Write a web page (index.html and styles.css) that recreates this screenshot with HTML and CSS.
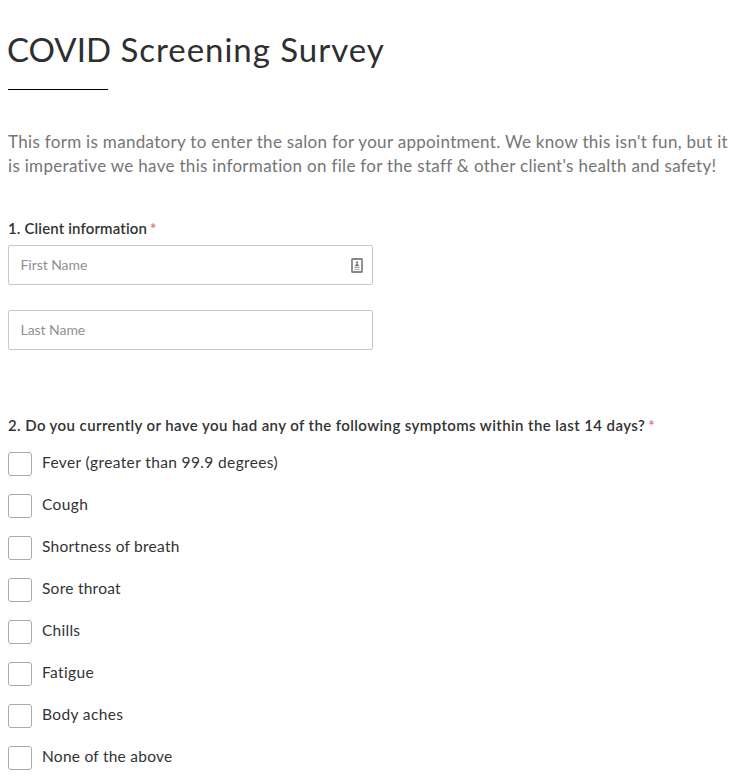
FILE: index.html
```html
<!DOCTYPE html>
<html lang="en">
<head>
<meta charset="utf-8">
<title>COVID Screening Survey</title>
<link rel="stylesheet" href="styles.css">
</head>
<body>
<main class="survey">
  <h1 class="title"><span class="acronym">COVID</span> Screening Survey</h1>
  <p class="intro">This form is mandatory to enter the salon for your appointment. We know this isn't fun, but it<br>is imperative we have this information on file for the staff &amp; other client's health and safety!</p>

  <section class="client">
    <h2 class="question question-short">1. Client information <span class="required">*</span></h2>
    <div class="field">
      <input class="input" type="text" placeholder="First Name" aria-label="First Name">
      <svg class="autofill" width="12" height="15" viewBox="0 0 12 15" aria-hidden="true">
        <rect x="1" y="1" width="10" height="13" rx="0.6" fill="#fff" stroke="#858585" stroke-width="1.8"/>
        <circle cx="6" cy="4.4" r="1.1" fill="#777"/>
        <path d="M6 5L8.4 8.2H3.6Z" fill="#777"/>
        <path d="M3.3 9.5H8.7M3.3 11.4H8.7" stroke="#a8a8a8" stroke-width="1"/>
      </svg>
    </div>
    <div class="field">
      <input class="input" type="text" placeholder="Last Name" aria-label="Last Name">
    </div>
  </section>

  <section class="symptoms">
    <h2 class="question">2. Do you currently or have you had any of the following symptoms within the last 14 days? <span class="required">*</span></h2>
    <div class="options">
      <label class="option"><input class="box" type="checkbox"><span class="label wide">Fever (greater than 99.9 degrees)</span></label>
      <label class="option"><input class="box" type="checkbox"><span class="label wide">Cough</span></label>
      <label class="option"><input class="box" type="checkbox"><span class="label">Shortness of breath</span></label>
      <label class="option"><input class="box" type="checkbox"><span class="label">Sore throat</span></label>
      <label class="option"><input class="box" type="checkbox"><span class="label">Chills</span></label>
      <label class="option"><input class="box" type="checkbox"><span class="label wide">Fatigue</span></label>
      <label class="option"><input class="box" type="checkbox"><span class="label wide">Body aches</span></label>
      <label class="option"><input class="box" type="checkbox"><span class="label">None of the above</span></label>
    </div>
  </section>
</main>
</body>
</html>
```

FILE: styles.css
```css
* { box-sizing: border-box; }

body {
  margin: 0;
  background: #fff;
  color: #333;
  font-family: Lato, "Open Sans", sans-serif;
}

.survey { padding: 27px 8px 0; }

.title {
  margin: 0;
  font-size: 33px;
  font-weight: 400;
  line-height: 44px;
  letter-spacing: 0.97px;
  color: #2e2f30;
}

.acronym {
  margin-left: -1px;
  letter-spacing: 0;
}

.title::after {
  content: "";
  display: block;
  width: 100px;
  height: 1px;
  margin-top: 18px;
  background: #000;
}

.intro {
  margin: 40px 0 0;
  font-size: 17px;
  line-height: 24px;
  letter-spacing: 0.31px;
  white-space: nowrap;
  color: #757575;
}

.client { margin-top: 40px; }

.question {
  margin: 0;
  font-size: 15px;
  font-weight: 600;
  line-height: 20px;
  letter-spacing: 0.4px;
  white-space: nowrap;
}

.question-short { letter-spacing: 0.14px; }

.required {
  margin-left: -1px;
  color: #e56a67;
}

.field {
  position: relative;
  width: 365px;
  margin-top: 7px;
}

.field + .field { margin-top: 25px; }

.input {
  display: block;
  width: 100%;
  height: 40px;
  padding: 0 12px 2px 11.5px;
  border: 1px solid #c8c8c8;
  border-radius: 2px;
  font: 14px Lato, "Open Sans", sans-serif;
  letter-spacing: -0.05px;
  color: #333;
}

.input::placeholder { color: #919191; }

.autofill {
  position: absolute;
  top: 12.5px;
  right: 10px;
}

.symptoms { margin-top: 65px; }

.options {
  display: grid;
  gap: 18px;
  margin-top: 17px;
}

.option {
  display: flex;
  gap: 10px;
  height: 24px;
}

.box {
  appearance: none;
  width: 24px;
  height: 24px;
  margin: 0;
  border: 1px solid #aaa;
  border-radius: 3px;
  background: #fff;
}

.label {
  font-size: 15.5px;
  line-height: 20px;
  letter-spacing: 0.25px;
}

.wide { letter-spacing: 0.37px; }
```
